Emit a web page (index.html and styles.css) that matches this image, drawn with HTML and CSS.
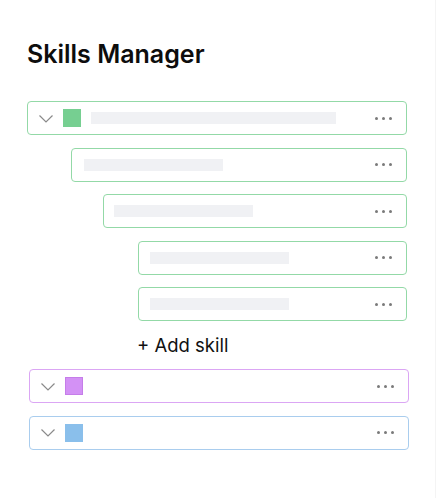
FILE: index.html
```html
<!DOCTYPE html>
<html>
<head>
<meta charset="utf-8">
<link rel="stylesheet" href="styles.css">
</head>
<body>
<div class="page">
  <h1 class="title">Skills Manager</h1>
  <div class="tree">
    <div class="row green lvl0">
      <svg class="chev" width="14" height="8" viewBox="0 0 14 8"><polyline points="0.5,0.5 7,7 13.5,0.5" fill="none" stroke="#8a8a8a" stroke-width="1.2"/></svg>
      <span class="sq sq-green"></span>
      <span class="bar bar-long"></span>
      <span class="dots"><i></i><i></i><i></i></span>
    </div>
    <div class="row green lvl1">
      <span class="bar"></span>
      <span class="dots"><i></i><i></i><i></i></span>
    </div>
    <div class="row green lvl2">
      <span class="bar"></span>
      <span class="dots"><i></i><i></i><i></i></span>
    </div>
    <div class="row green lvl3">
      <span class="bar"></span>
      <span class="dots"><i></i><i></i><i></i></span>
    </div>
    <div class="row green lvl3">
      <span class="bar"></span>
      <span class="dots"><i></i><i></i><i></i></span>
    </div>
    <div class="add">+ Add skill</div>
    <div class="row purple top">
      <svg class="chev" width="14" height="8" viewBox="0 0 14 8"><polyline points="0.5,0.5 7,7 13.5,0.5" fill="none" stroke="#8a8a8a" stroke-width="1.2"/></svg>
      <span class="sq sq-purple"></span>
      <span class="dots"><i></i><i></i><i></i></span>
    </div>
    <div class="row blue top">
      <svg class="chev" width="14" height="8" viewBox="0 0 14 8"><polyline points="0.5,0.5 7,7 13.5,0.5" fill="none" stroke="#8a8a8a" stroke-width="1.2"/></svg>
      <span class="sq sq-blue"></span>
      <span class="dots"><i></i><i></i><i></i></span>
    </div>
  </div>
</div>
</body>
</html>
```

FILE: styles.css
```css
* { box-sizing: border-box; }
html, body { margin: 0; padding: 0; background: #fff; }
body { font-family: Inter, "Noto Sans", sans-serif; color: #111; }
.page { padding: 38px 29px 0 27px; width: 436px; height: 498px; box-shadow: inset -1px 0 0 #f4f4f4; }
.title { margin: 0; font-size: 25px; font-weight: 600; line-height: 32px; letter-spacing: 0; color: #0d0d0d; }
.tree { display: flex; flex-direction: column; gap: 12.5px; margin-top: 31px; }
.row { height: 34px; border: 1px solid #93d9a7; border-radius: 4px; display: flex; align-items: center; padding: 0 14px 0 11px; background: #fff; }
.green { border-color: #93d9a7; }
.purple { border-color: #dba6f4; }
.blue { border-color: #a9cdee; }
.lvl1 { margin-left: 43.5px; }
.lvl1 .bar { margin-left: 1px; }
.lvl2 { margin-left: 76px; }
.lvl2 .bar { margin-left: -1px; }
.lvl3 { margin-left: 110.5px; }
.lvl3 .bar { margin-left: 0.5px; }
.top { margin-left: 2px; margin-right: -2px; }
.chev { flex: none; margin-top: 1px; }
.sq { width: 18px; height: 18px; flex: none; margin-left: 9.5px; }
.sq-green { background: #76cf91; }
.sq-purple { background: #d391f5; border: 1px solid #c57de9; }
.sq-blue { background: #8abfeb; }
.bar { height: 12px; width: 139px; background: #f0f1f4; flex: none; }
.bar-long { width: 245px; margin-left: 10px; }
.dots { margin-left: auto; display: flex; gap: 4px; align-items: center; }
.dots i { width: 3px; height: 3px; border-radius: 50%; background: #7a7a7a; display: block; }
.add { margin: 0 0 0 110px; font-size: 18.5px; line-height: 23px; height: 23px; font-weight: 400; color: #111; }
```
